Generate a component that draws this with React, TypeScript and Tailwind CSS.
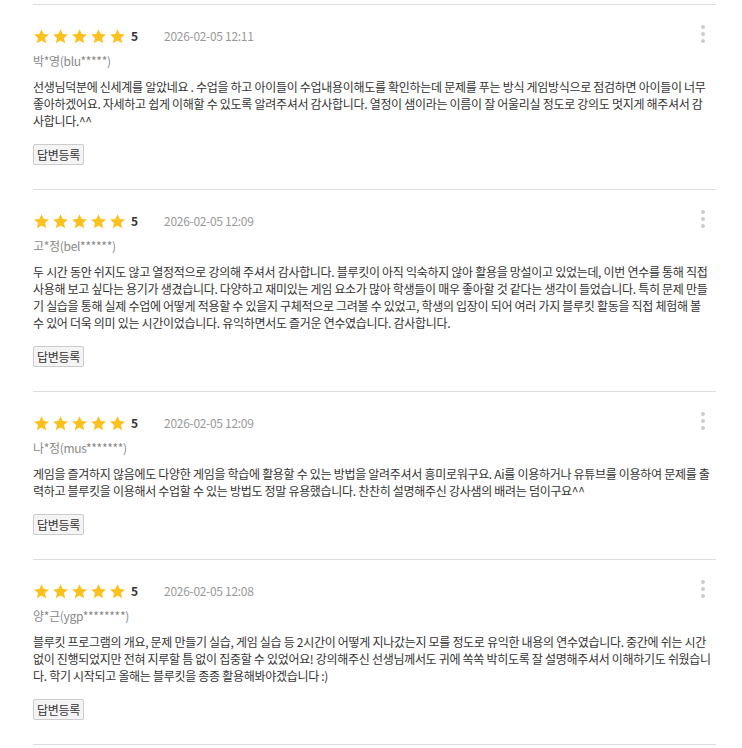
const reviews = [
  {
    date: '2026-02-05 12:11',
    user: '박*영(blu*****)',
    text: '선생님덕분에 신세계를 알았네요 . 수업을 하고 아이들이 수업내용이해도를 확인하는데 문제를 푸는 방식 게임방식으로 점검하면 아이들이 너무 좋아하겠어요. 자세하고 쉽게 이해할 수 있도록 알려주셔서 감사합니다. 열정이 샘이라는 이름이 잘 어울리실 정도로 강의도 멋지게 해주셔서 감사합니다.^^',
  },
  {
    date: '2026-02-05 12:09',
    user: '고*정(bel******)',
    text: '두 시간 동안 쉬지도 않고 열정적으로 강의해 주셔서 감사합니다. 블루킷이 아직 익숙하지 않아 활용을 망설이고 있었는데, 이번 연수를 통해 직접 사용해 보고 싶다는 용기가 생겼습니다. 다양하고 재미있는 게임 요소가 많아 학생들이 매우 좋아할 것 같다는 생각이 들었습니다. 특히 문제 만들기 실습을 통해 실제 수업에 어떻게 적용할 수 있을지 구체적으로 그려볼 수 있었고, 학생의 입장이 되어 여러 가지 블루킷 활동을 직접 체험해 볼 수 있어 더욱 의미 있는 시간이었습니다. 유익하면서도 즐거운 연수였습니다. 감사합니다.',
  },
  {
    date: '2026-02-05 12:09',
    user: '나*정(mus*******)',
    text: '게임을 즐겨하지 않음에도 다양한 게임을 학습에 활용할 수 있는 방법을 알려주셔서 흥미로워구요. Ai를 이용하거나 유튜브를 이용하여 문제를 출력하고 블루킷을 이용해서 수업할 수 있는 방법도 정말 유용했습니다. 찬찬히 설명해주신 강사샘의 배려는 덤이구요^^',
  },
  {
    date: '2026-02-05 12:08',
    user: '양*근(ygp********)',
    text: '블루킷 프로그램의 개요, 문제 만들기 실습, 게임 실습 등 2시간이 어떻게 지나갔는지 모를 정도로 유익한 내용의 연수였습니다. 중간에 쉬는 시간 없이 진행되었지만 전혀 지루할 틈 없이 집중할 수 있었어요! 강의해주신 선생님께서도 귀에 쏙쏙 박히도록 잘 설명해주셔서 이해하기도 쉬웠습니다. 학기 시작되고 올해는 블루킷을 종종 활용해봐야겠습니다 :)',
  },
]

const Star = () => (
  <svg width="17" height="17" viewBox="0 0 24 24" className="shrink-0">
    <path
      fill="#fdc11e"
      d="M12 1.6l3.1 6.9 7.4.7-5.6 5 1.7 7.4L12 17.8l-6.6 3.8 1.7-7.4-5.6-5 7.4-.7z"
    />
  </svg>
)

const ReviewItem = ({ review }: { review: (typeof reviews)[number] }) => {
  return (
    <div className="relative border-t border-[#dddddd] pt-[21px] pb-[24px]">
      <div className="flex items-center h-5">
        <div className="flex gap-[2px]">
          <Star />
          <Star />
          <Star />
          <Star />
          <Star />
        </div>
        <span className="ml-[5px] text-[12px] font-bold text-[#333]">5</span>
        <span className="ml-[26px] text-[12px] tracking-[-0.3px] text-[#999]">
          {review.date}
        </span>
      </div>
      <button className="absolute right-[7px] top-[16px] flex flex-col gap-[3px] p-1">
        <span className="w-1 h-1 rounded-full bg-[#cccccc]" />
        <span className="w-1 h-1 rounded-full bg-[#cccccc]" />
        <span className="w-1 h-1 rounded-full bg-[#cccccc]" />
      </button>
      <p className="mt-[6px] text-[12px] leading-[18px] tracking-[-0.3px] text-[#888]">
        {review.user}
      </p>
      <p className="mt-[8px] text-[12px] leading-[17px] tracking-[-0.3px] text-[#333] break-all pr-1">
        {review.text}
      </p>
      <button className="block mt-[15px] h-[21px] px-[3px] border border-[#cccccc] bg-[#f4f4f4] rounded-[2px] text-[12px] tracking-[-0.3px] text-[#333] leading-none">
        답변등록
      </button>
    </div>
  )
}

export default function App() {
  return (
    <div
      className="bg-white min-h-screen pt-1"
      style={{ fontFamily: '"Noto Sans CJK KR", "Noto Sans", sans-serif' }}
    >
      <div className="ml-[33px] w-[683px] border-b border-[#dddddd]">
        {reviews.map((r, i) => (
          <ReviewItem key={i} review={r} />
        ))}
      </div>
    </div>
  )
}
